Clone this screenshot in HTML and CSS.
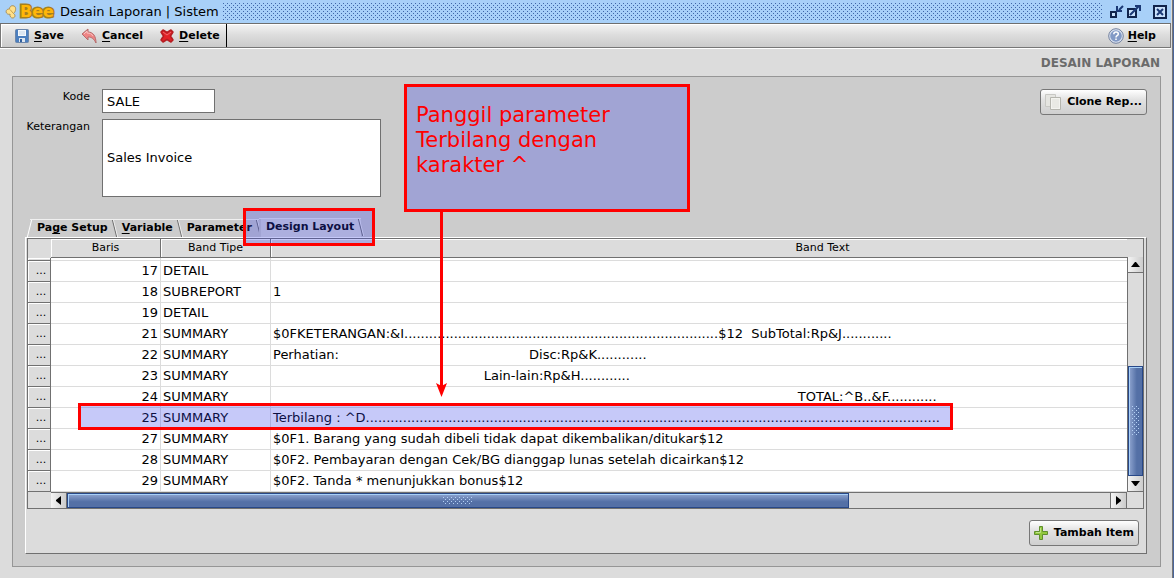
FILE: index.html
```html
<!DOCTYPE html>
<html lang="id">
<head>
<meta charset="utf-8">
<title>Desain Laporan | Sistem</title>
<link rel="stylesheet" href="styles.css">
</head>
<body>
<div class="window">
  <header class="titlebar">
    <svg class="wing" width="12" height="14" viewBox="0 0 12 14" aria-hidden="true"><path d="M9 1C6 0 4.500 2 4.500 4 1.500 4 .5 6 1.500 8c1 1.500 3 1.500 3.500 1C4.500 11 6 13.500 8 13c2.500-.5 2.500-3.500.5-4.500C11 6.500 11.500 2 9 1Z" fill="#ffe08a" stroke="#a8905a"/><path d="M5 4.500 8 8" stroke="#c9a24c"/></svg>
    <span class="brand">Bee</span>
    <h1 class="title">Desain Laporan | Sistem</h1>
    <div class="grip"></div>
    <div class="controls">
      <button class="control" aria-label="Minimize"><svg width="16" height="16" viewBox="0 0 16 16"><path d="M3 8h5v5H3Z" fill="#c8e0fa" stroke="#10244c" stroke-width="2"/><path d="M15 2l-4 4M9 2v5h5" fill="none" stroke="#1b3975" stroke-width="2"/></svg></button>
      <button class="control" aria-label="Maximize"><svg width="16" height="16" viewBox="0 0 16 16"><path d="M2 5h8v8H2Z" fill="#c8e0fa" stroke="#10244c" stroke-width="2"/><path d="M4 11l9-9M9 2h5v5" fill="none" stroke="#1b3975" stroke-width="2"/></svg></button>
      <button class="control close" aria-label="Close"><svg width="16" height="16" viewBox="0 0 16 16"><path d="M2 2h12v12H2Z" fill="#c8e0fa" stroke="#10244c" stroke-width="2"/><path d="M5 5l6 6M11 5l-6 6" stroke="#1b3975" stroke-width="2"/></svg></button>
    </div>
  </header>

  <nav class="toolbar">
    <div class="actions">
      <button class="tool"><svg width="14" height="14" viewBox="0 0 14 14"><rect x=".5" y=".5" width="13" height="13" rx="1" fill="#4c7fbf" stroke="#6b86ab"/><path d="M3 1h8v6H3Z" fill="#f4f8fc"/><path d="M4 3h6M4 5h6" stroke="#c4d4e6"/><path d="M4 9h6v4H4Z" fill="#dde5ee"/><path d="M5 10h2v3H5Z" fill="#315f9d"/></svg><span><u>S</u>ave</span></button>
      <button class="tool"><svg width="16" height="16" viewBox="0 0 16 16"><path d="M1 6 7 1v3c5 0 8 4 8 11-2-4-4-6-8-6v3Z" fill="#ef8585" stroke="#b56b6b" stroke-linejoin="round"/><path d="M3 6 6 3v2c3 0 5 1 6 3" fill="none" stroke="#f9c4c4"/></svg><span><u>C</u>ancel</span></button>
      <button class="tool"><svg width="14" height="14" viewBox="0 0 14 14"><path d="M3 1 1 3l2.500 4L1 11l2 2 4-2.500 4 2.500 2-2-2.500-4L13 3l-2-2-4 2.500Z" fill="#e22228" stroke="#b51d22" stroke-width="1.500" stroke-linejoin="round"/><path d="m3 3 4 3 4-3" fill="none" stroke="#f0696c"/></svg><span><u>D</u>elete</span></button>
    </div>
    <button class="tool help"><svg width="16" height="16" viewBox="0 0 16 16"><circle cx="8" cy="8" r="7.3" fill="#dce4f1" stroke="#7281a0"/><circle cx="8" cy="8" r="5.8" fill="#829ac6"/><path d="M5.8 6.2c0-3 4.500-2.800 4.500-.2C10.300 7.700 8 7.600 8 9.400M8 10.500v1.600" fill="none" stroke="#fff" stroke-width="1.500"/></svg><span><u>H</u>elp</span></button>
  </nav>

  <h2 class="heading">DESAIN LAPORAN</h2>

  <main class="panel">
    <div class="top">
      <form class="form">
        <label for="kode">Kode</label>
        <input id="kode" class="kode" type="text" value="SALE">
        <label for="ket">Keterangan</label>
        <textarea id="ket" class="ket">Sales Invoice</textarea>
      </form>
      <button class="button"><svg width="16" height="16" viewBox="0 0 16 16"><path d="M.5.5h10v12H.5Z" fill="#e5e5e1" stroke="#c8c8c4"/><path d="M5.500 3.500h10v12h-10Z" fill="#f3f3ef" stroke="#b5b5ae"/><path d="M7 5h7v9H7Z" fill="#e9e9e4"/></svg>Clone Rep...</button>
    </div>

    <div class="tabs" role="tablist">
      <button class="tab first" role="tab"><span>Pa<u>g</u>e Setup</span></button>
      <button class="tab" role="tab"><span><u>V</u>ariable</span></button>
      <button class="tab" role="tab"><span>Parameter</span></button>
      <button class="tab active" role="tab" aria-selected="true"><span>Design Layout</span></button>
    </div>

    <section class="sheet">
      <div class="scroller">
        <div class="viewport">
          <table class="grid">
            <colgroup><col class="c-head"><col class="c-num"><col class="c-type"><col class="c-text"></colgroup>
            <thead><tr><th></th><th>Baris</th><th>Band Tipe</th><th>Band Text</th></tr></thead>
            <tbody>
              <tr class="cut"><th></th><td></td><td></td><td></td></tr>
              <tr><th>...</th><td>17</td><td>DETAIL</td><td></td></tr>
              <tr><th>...</th><td>18</td><td>SUBREPORT</td><td>1</td></tr>
              <tr><th>...</th><td>19</td><td>DETAIL</td><td></td></tr>
              <tr><th>...</th><td>21</td><td>SUMMARY</td><td>$0FKETERANGAN:&amp;I............................................................................$12  SubTotal:Rp&amp;J............</td></tr>
              <tr><th>...</th><td>22</td><td>SUMMARY</td><td>Perhatian:                                              Disc:Rp&amp;K............</td></tr>
              <tr><th>...</th><td>23</td><td>SUMMARY</td><td>                                                   Lain-lain:Rp&amp;H............</td></tr>
              <tr><th>...</th><td>24</td><td>SUMMARY</td><td>                                                                                                                               TOTAL:^B..&amp;F............</td></tr>
              <tr><th>...</th><td>25</td><td>SUMMARY</td><td>Terbilang : ^D...........................................................................................................................................</td></tr>
              <tr><th>...</th><td>27</td><td>SUMMARY</td><td>$0F1. Barang yang sudah dibeli tidak dapat dikembalikan/ditukar$12</td></tr>
              <tr><th>...</th><td>28</td><td>SUMMARY</td><td>$0F2. Pembayaran dengan Cek/BG dianggap lunas setelah dicairkan$12</td></tr>
              <tr><th>...</th><td>29</td><td>SUMMARY</td><td>$0F2. Tanda * menunjukkan bonus$12</td></tr>
            </tbody>
          </table>
        </div>
        <div class="vbar">
          <button class="arrow" aria-label="Up"><svg width="9" height="5" viewBox="0 0 9 5"><path d="M0 5h9L5 0H4Z"/></svg></button>
          <div class="vtrack"><div class="vthumb"><i class="knurl vknurl"></i></div></div>
          <button class="arrow" aria-label="Down"><svg width="9" height="5" viewBox="0 0 9 5"><path d="M0 0h9L5 5H4Z"/></svg></button>
        </div>
        <div class="hbar">
          <button class="arrow" aria-label="Left"><svg width="5" height="9" viewBox="0 0 5 9"><path d="M5 0v9L0 5V4Z"/></svg></button>
          <div class="htrack"><div class="hthumb"><i class="knurl hknurl"></i></div></div>
          <button class="arrow" aria-label="Right"><svg width="5" height="9" viewBox="0 0 5 9"><path d="M0 0v9l5-4V4Z"/></svg></button>
        </div>
      </div>
      <div class="footer">
        <button class="button"><svg width="14" height="14" viewBox="0 0 14 14"><path d="M5.500.5h3v5h5v3h-5v5h-3v-5h-5v-3h5Z" fill="#92c83e" stroke="#5f8f2d"/><path d="M6.500 2v4.500H2" fill="none" stroke="#bfe388"/></svg>Tambah Item</button>
      </div>
    </section>
  </main>

  <div class="mark mark-tab"></div>
  <div class="mark mark-row"></div>
  <p class="mark mark-note">Panggil parameter Terbilang dengan karakter ^</p>
  <svg class="pointer" width="13" height="186" viewBox="0 0 13 186" aria-hidden="true"><path d="M5 0h3v175H5Z" fill="#f00"/><path d="M6.500 186 1 172l5.500 3 5.500-3Z" fill="#f00"/></svg>
</div>
</body>
</html>
```

FILE: styles.css
```css
* { box-sizing: border-box; }

body {
  margin: 0;
  background: #dcdcdc;
  color: #000;
  font: 13px/16px "DejaVu Sans", sans-serif;
}

button {
  margin: 0;
  padding: 0;
  border: 0;
  background: none;
  color: inherit;
  font: bold 11px/16px "DejaVu Sans", sans-serif;
}

svg { display: block; flex: none; }
u { text-underline-offset: 2px; }

.window {
  position: relative;
  min-height: 100vh;
  padding-right: 2px;
  border-right: 1px solid #4a659b;
  box-shadow: inset -1px 0 #777;
}

/* Title bar */
.titlebar {
  display: flex;
  align-items: center;
  height: 24px;
  padding: 0 3px 0 5px;
  border-bottom: 1px solid #6e6e6e;
  background: #a8d0f8;
}
.brand {
  width: 37px;
  margin-left: 3px;
  color: #ffb608;
  font-size: 16px;
  font-weight: bold;
  -webkit-text-stroke: 3px #a5801f;
  paint-order: stroke fill;
}
.title { margin: 0 4px 0 3px; font-size: 13px; font-weight: normal; }
.grip, .knurl {
  --dot: #3f66a8;
  background:
    conic-gradient(from 270deg at 1px 1px, var(--dot) 90deg, transparent 0) 0 0 / 4px 4px,
    conic-gradient(from 270deg at 1px 1px, var(--dot) 90deg, transparent 0) 2px 2px / 4px 4px;
}
.grip { flex: 1; height: 18px; }
.controls { display: flex; gap: 2px; margin-left: 5px; }
.close { margin-left: 8px; }

/* Toolbar */
.toolbar {
  display: flex;
  justify-content: space-between;
  height: 24px;
  border: 1px solid #777;
  border-top: 0;
  background: linear-gradient(#f4f4f4, #dedede 45%, #cbcbcb);
  box-shadow: inset 1px 1px #fff, 0 1px #fff;
}
.actions { display: flex; gap: 17px; padding: 0 6px 0 14px; border-right: 1px solid #000; }
.tool { display: flex; align-items: center; gap: 5px; }
.help { gap: 4px; padding-right: 14px; }

.heading {
  margin: 8px 11px 5px;
  color: #6b6b6b;
  font-size: 12px;
  line-height: 15px;
  text-align: right;
}

/* Panel */
.panel {
  margin: 0 10px 12px 12px;
  padding: 12px 13px 12px 12px;
  border: 1px solid #969696;
  background: #ccc;
}
.top { display: flex; justify-content: space-between; align-items: flex-start; }
.form {
  display: grid;
  grid-template-columns: 65px 279px;
  gap: 6px 12px;
  font-size: 11px;
}
.form label { text-align: right; }
.kode, .ket {
  margin: 0;
  border: 1px solid #707070;
  background: #fff;
  color: #000;
  font: 13px/16px "DejaVu Sans", sans-serif;
}
.kode { width: 113px; height: 24px; padding: 0 4px; }
.ket { height: 78px; padding: 30px 4px; resize: none; overflow: hidden; }

.button {
  display: flex;
  align-items: center;
  gap: 6px;
  height: 26px;
  padding: 0 4px;
  border: 1px solid #777;
  border-radius: 3px;
  background: linear-gradient(#fff, #e2e2e2 40%, #cfcfcf);
}

/* Tabs */
.tabs {
  display: flex;
  align-items: flex-end;
  height: 19px;
  margin: 21px 0 0 5px;
}
.tab {
  position: relative;
  height: 18px;
  padding: 0 7px 2px;
  border-top: 1px solid #f0f0f0;
}
.tab::after {
  content: "";
  position: absolute;
  top: 0;
  right: 0;
  width: 3px;
  height: 17px;
  border-right: 1px solid #707070;
  box-shadow: 1px 0 #f0f0f0;
  transform: skewX(14deg);
}
.first::before {
  content: "";
  position: absolute;
  top: 0;
  left: -1px;
  width: 3px;
  height: 17px;
  border-left: 1px solid #fff;
  transform: skewX(-14deg);
}
.active { height: 19px; padding-bottom: 4px; background: linear-gradient(90deg, #ccc 2px, #dcdcdc 2px); }

.sheet {
  padding: 0 2px 7px 1px;
  border: 1px solid #707070;
  border-top-color: #fff;
  border-left-color: #fff;
  background: #dcdcdc;
}
.scroller {
  display: grid;
  grid-template-columns: minmax(0, 1fr) 16px;
  border: 1px solid #707070;
}
.viewport { overflow: hidden; }

/* Table */
.grid {
  width: 1347px;
  table-layout: fixed;
  border-collapse: separate;
  border-spacing: 0;
}
.c-head { width: 23px; }
.c-num, .c-type { width: 110px; }
.grid th {
  padding: 0;
  border: solid #707070;
  border-width: 0 1px 1px 0;
  background: #dcdcdc;
  box-shadow: inset 1px 1px #fff;
  font-size: 11px;
  font-weight: normal;
}
.grid thead th { height: 19px; }
.grid thead th:first-child { border-color: #dcdcdc; box-shadow: none; }
.grid td {
  height: 21px;
  padding: 0 2px;
  border: solid #dcdcdc;
  border-width: 0 1px 1px 0;
  background: #fff;
  line-height: 20px;
  white-space: pre;
}
.grid td:nth-child(2) { text-align: right; }
.grid tbody th { padding-left: 4px; }
.grid .cut td, .grid .cut th { height: 3px; }

/* Scroll bars */
.arrow {
  display: grid;
  place-items: center;
  width: 16px;
  height: 16px;
  border: solid #707070;
  border-width: 0 1px 1px 0;
  background: linear-gradient(90deg, #f4f4f4, #ccc);
}
.vbar {
  display: grid;
  grid-template-rows: 16px 1fr 16px;
  margin-top: 18px;
  border-left: 1px solid #707070;
}
.vbar .arrow { width: 15px; border-right: 0; }
.vtrack { display: flex; align-items: flex-end; }
.vthumb, .hthumb {
  display: grid;
  place-items: center;
  border: 1px solid #284888;
  box-shadow: inset 1px 1px #a8d0f8;
}
.vthumb { width: 15px; height: 54%; background: linear-gradient(90deg, #8fa5d0, #5470a6 60%); }
.hbar {
  display: grid;
  grid-template-columns: 16px 1fr 16px;
  margin-left: 23px;
  border-top: 1px solid #707070;
}
.hbar .arrow { height: 15px; border-bottom: 0; }
.htrack { border-right: 1px solid #707070; }
.hthumb { width: 75%; height: 15px; background: linear-gradient(#8fa5d0, #5470a6 60%); }
.knurl { --dot: #b4d0f4; }
.vknurl { width: 8px; height: 30px; }
.hknurl { width: 30px; height: 8px; }

.footer { display: flex; justify-content: flex-end; padding: 11px 5px 0; }

/* Annotations drawn over the window */
.mark {
  position: absolute;
  margin: 0;
  border: 3px solid #f00;
  background: rgba(48, 59, 233, 0.275);
}
.mark-tab { left: 243px; top: 208px; width: 132px; height: 38px; }
.mark-row { left: 78px; top: 403px; width: 875px; height: 27px; }
.mark-note {
  left: 404px;
  top: 84px;
  width: 286px;
  height: 128px;
  padding: 16px 60px 0 9px;
  color: #f00;
  font-size: 21px;
  line-height: 25px;
}
.pointer { position: absolute; left: 435px; top: 211px; }
```
